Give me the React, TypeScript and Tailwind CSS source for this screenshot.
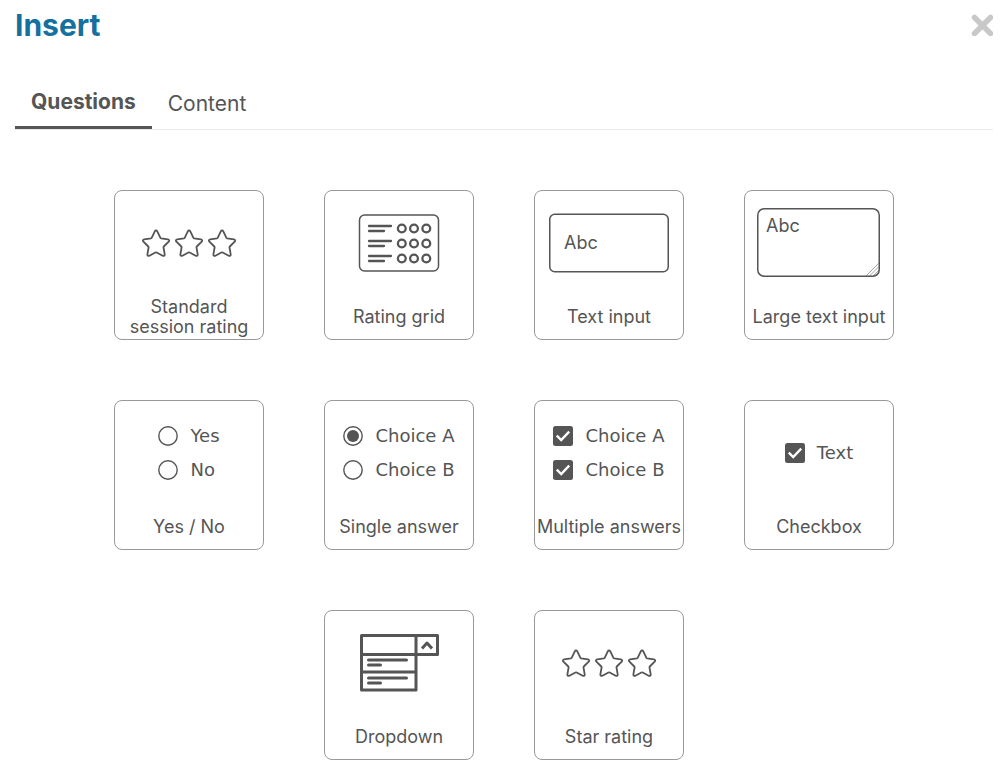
import React from 'react';

const STAR =
  'M14 1.5c.6 0 1 .3 1.3.9l3 6.3c.2.4.5.6.9.7l6.7 1c1.300.2 1.700 1.400.8 2.300l-4.900 4.800c-.3.3-.4.6-.3 1l1.200 6.800c.2 1.200-.9 2-2 1.400l-6-3.200c-.4-.2-.9-.2-1.300 0l-6 3.200c-1.100.6-2.200-.2-2-1.400l1.200-6.800c.1-.4 0-.7-.3-1l-4.900-4.800c-.9-.9-.5-2.100.8-2.300l6.700-1c.4-.1.7-.3.9-.7l3-6.300c.3-.6.7-.9 1.200-.9z';

function Stars() {
  return (
    <svg width="94" height="28" viewBox="0 0 94 28" fill="none" stroke="#555" strokeWidth="1.8" aria-hidden="true">
      <path d={STAR} />
      <path d={STAR} transform="translate(33 0)" />
      <path d={STAR} transform="translate(66 0)" />
    </svg>
  );
}

function RatingGrid() {
  return (
    <svg width="82" height="58" viewBox="0 0 82 58" fill="none" stroke="#555" strokeLinecap="round" aria-hidden="true">
      <rect x="1.500" y="1" width="79" height="56" rx="5" strokeWidth="1.500" />
      {[0, 15, 30].map((y) => (
        <g key={y} strokeWidth="2.300">
          <path d={`M11 ${12 + y}h22M11 ${17 + y}h15`} />
          <circle cx="43.800" cy={14.5 + y} r="3.900" />
          <circle cx="56" cy={14.5 + y} r="3.900" />
          <circle cx="68.300" cy={14.5 + y} r="3.900" />
        </g>
      ))}
    </svg>
  );
}

function TextInput() {
  return (
    <svg width="120" height="60" viewBox="0 0 120 60" aria-hidden="true">
      <rect x="0.750" y="1.250" width="118.500" height="57.500" rx="5" fill="none" stroke="#555" strokeWidth="1.500" />
      <text x="15" y="36" fontSize="18" fill="#555">
        Abc
      </text>
    </svg>
  );
}

function LargeTextInput() {
  return (
    <svg width="124" height="70" viewBox="0 0 124 70" fill="none" aria-hidden="true">
      <path d="m109 68 13-13M112.500 68l9.500-9.500M116 68l6-6M119 68l3-3" stroke="#999" strokeWidth="0.900" />
      <rect x="0.750" y="0.750" width="121.500" height="67.500" rx="6.500" stroke="#555" strokeWidth="1.500" />
      <text x="9" y="24" fontSize="18" fill="#555">
        Abc
      </text>
    </svg>
  );
}

function RadioMark({ checked = false }: { checked?: boolean }) {
  return (
    <svg width="20" height="20" viewBox="0 0 20 20" aria-hidden="true">
      <circle cx="10" cy="10" r="9.200" fill="none" stroke="#555" strokeWidth="1.400" />
      {checked && <circle cx="10" cy="10" r="6" fill="#555" />}
    </svg>
  );
}

function CheckMark() {
  return (
    <svg width="20" height="20" viewBox="0 0 20 20" aria-hidden="true">
      <rect width="20" height="20" rx="2.500" fill="#555" />
      <path d="m3.800 9.700 4.400 4.300L16.200 5.700" fill="none" stroke="#fff" strokeWidth="2.400" />
    </svg>
  );
}

function Choices({ items }: { items: { text: string; mark: React.ReactNode }[] }) {
  return (
    <span className="flex flex-col gap-3.5">
      {items.map((item) => (
        <span key={item.text} className="flex h-5 items-center gap-3 font-['DejaVu_Sans',sans-serif] text-lg">
          {item.mark}
          {item.text}
        </span>
      ))}
    </span>
  );
}

function Dropdown() {
  return (
    <svg width="80" height="58" viewBox="0 0 80 58" fill="none" stroke="#555" strokeWidth="3" strokeLinejoin="round" aria-hidden="true">
      <path d="M2.500 1.500h76v19h-76zM2.500 20v36H57V2M2.500 38H57" />
      <path d="M9.500 26h38M9.500 31h12M9.500 44h38M9.500 49h12" strokeLinecap="round" />
      <path d="m63 14.500 5-5.500 5 5.500" />
    </svg>
  );
}

const questions = [
  { label: 'Standard\nsession rating', picture: <Stars /> },
  { label: 'Rating grid', picture: <RatingGrid /> },
  { label: 'Text input', picture: <TextInput /> },
  { label: 'Large text input', picture: <LargeTextInput /> },
  {
    label: 'Yes / No',
    picture: <Choices items={[{ text: 'Yes', mark: <RadioMark /> }, { text: 'No', mark: <RadioMark /> }]} />,
  },
  {
    label: 'Single answer',
    picture: <Choices items={[{ text: 'Choice A', mark: <RadioMark checked /> }, { text: 'Choice B', mark: <RadioMark /> }]} />,
  },
  {
    label: 'Multiple answers',
    picture: <Choices items={[{ text: 'Choice A', mark: <CheckMark /> }, { text: 'Choice B', mark: <CheckMark /> }]} />,
  },
  { label: 'Checkbox', picture: <Choices items={[{ text: 'Text', mark: <CheckMark /> }]} /> },
  { label: 'Dropdown', picture: <Dropdown /> },
  { label: 'Star rating', picture: <Stars /> },
];

export default function App() {
  return (
    <div className="bg-white pr-[13px] pb-4 pl-[15px] font-[Inter,sans-serif] text-[#555]">
      <header className="flex items-center justify-between pt-[5px]">
        <h1 className="text-3xl leading-10 font-bold text-[#14719f]">Insert</h1>
        <button type="button" aria-label="Close">
          <svg width="22" height="22" viewBox="0 0 22 22" stroke="#c8c8c8" strokeWidth="5.500" aria-hidden="true">
            <path d="m3.500 3.500 16 16M19.500 3.500l-16 16" strokeLinecap="round" />
          </svg>
        </button>
      </header>

      <div role="tablist" className="mt-[33px] flex border-b border-[#eaeaea] text-[21px] leading-8">
        <button type="button" role="tab" aria-selected="true" className="h-[51px] border-b-3 border-[#555] px-4 font-bold">
          Questions
        </button>
        <button type="button" role="tab" aria-selected="false" className="h-[51px] px-4">
          Content
        </button>
      </div>

      <main className="mt-[60px] flex flex-wrap justify-center gap-[60px]">
        {questions.map((q) => (
          <button
            key={q.label}
            type="button"
            className="flex h-[150px] w-[150px] flex-col items-center rounded-lg border border-[#999]"
          >
            <span className="flex h-[104px] shrink-0 items-center justify-center">{q.picture}</span>
            <span className="flex h-11 items-center text-lg leading-5 whitespace-pre-line">{q.label}</span>
          </button>
        ))}
      </main>
    </div>
  );
}
